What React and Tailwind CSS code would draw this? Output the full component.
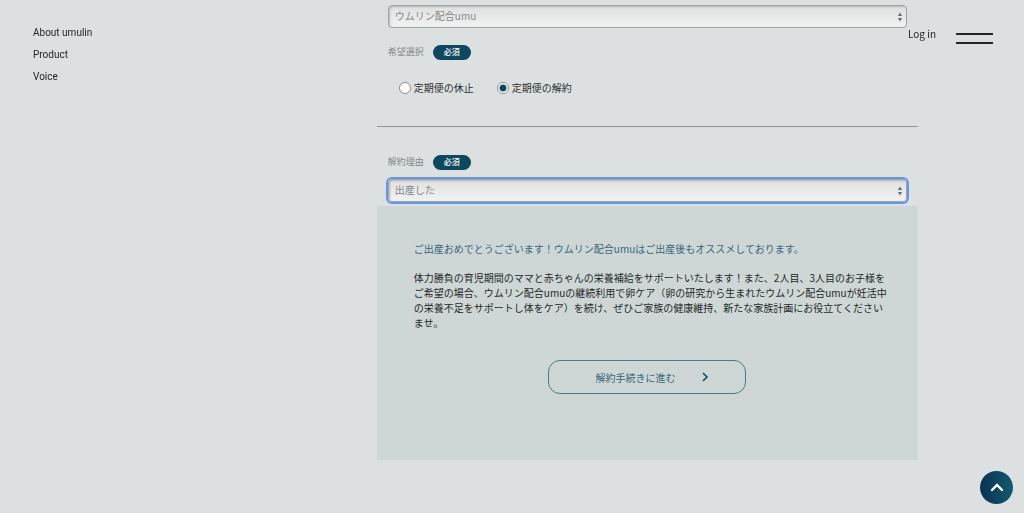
import React, { useState } from "react";

const products = ["ウムリン配合umu"];
const reasons = ["出産した"];

function Required() {
  return (
    <span className="w-[38px] h-[15px] flex items-center justify-center rounded-full bg-[#0d485e] text-white text-[8px] leading-none font-medium">
      必須
    </span>
  );
}

function SelectBox({ id, label, options, active }) {
  return (
    <div className="relative">
      <select
        id={id}
        aria-label={label}
        className={
          "block w-full h-[23px] pl-[6px] pr-5 pb-[2px] appearance-none rounded-[4px] border border-[#a2a5a6] bg-linear-to-b from-[#dfe1e0] to-[#f1f3f2] text-[10px] text-[#858888] outline-none shadow-[inset_1px_1px_2px_#b5b8b8] " +
          (active ? "ring-2 ring-[#6695ea]" : "")
        }
      >
        {options.map((option) => (
          <option key={option}>{option}</option>
        ))}
      </select>
      <svg
        viewBox="0 0 6 10"
        className="absolute right-1 top-[7px] w-[6px] h-[10px] pointer-events-none"
        fill="#6b6e6f"
      >
        <path d="M3 0.5 5.2 4H0.8Z" />
        <path d="M3 9.5 0.8 6h4.4Z" />
      </svg>
    </div>
  );
}

function Radio({ value, label, checked, onChange }) {
  return (
    <label className="flex items-center gap-[3px] text-[10px] leading-4 text-[#2b2f30]">
      <input
        type="radio"
        name="wish"
        value={value}
        checked={checked}
        onChange={() => onChange(value)}
        className="w-3 h-3 appearance-none rounded-full border border-[#8b8e90] bg-white checked:bg-[radial-gradient(circle,#0d485e_3px,#fff_4px)]"
      />
      {label}
    </label>
  );
}

function App() {
  const [wish, setWish] = useState("cancel");

  return (
    <div className="min-h-screen bg-[#dce0e1] font-['Noto_Sans_CJK_JP',sans-serif]">
      <header className="fixed inset-x-0 top-0 z-10 flex items-start justify-between pl-[33px] pr-[31px] pt-[22px] text-[10px] text-[#232627] pointer-events-none">
        <nav className="flex flex-col font-[Roboto,sans-serif] pointer-events-auto">
          <a href="#about" className="leading-[22px]">About umulin</a>
          <a href="#product" className="leading-[22px]">Product</a>
          <a href="#voice" className="leading-[22px]">Voice</a>
        </nav>
        <div className="flex items-start gap-5 pointer-events-auto">
          <a href="#login" className="leading-6">Log in</a>
          <button type="button" aria-label="Menu" className="w-[37px] flex flex-col gap-[7px] pt-[11px]">
            <span className="w-full h-[2px] bg-[#232627]"></span>
            <span className="w-full h-[2px] bg-[#232627]"></span>
          </button>
        </div>
      </header>

      <main className="ml-[36.8%] mr-[106px] pt-[5px] pb-[53px]">
        <section className="px-[11px]">
          <SelectBox id="product" label="Product" options={products} />
          <div className="flex items-center gap-[9px] mt-4 h-4">
            <span className="text-[9px] text-[#858888]">希望選択</span>
            <Required />
          </div>
          <div className="flex gap-[23px] mt-5 pl-[11px] h-4">
            <Radio value="pause" label="定期便の休止" checked={wish === "pause"} onChange={setWish} />
            <Radio value="cancel" label="定期便の解約" checked={wish === "cancel"} onChange={setWish} />
          </div>
        </section>

        <hr className="mt-[30px] border-t border-[#919596]" />

        <section className="px-[11px] mt-[27px]">
          <div className="flex items-center gap-[9px] h-4">
            <label htmlFor="reason" className="text-[9px] text-[#858888]">解約理由</label>
            <Required />
          </div>
          <div className="mt-[9px]">
            <SelectBox id="reason" options={reasons} active />
          </div>
        </section>

        <section className="mt-1 pt-[35px] pb-[66px] bg-[#cfd7d6] text-[10px] leading-[15px] text-[#232829]">
          <div className="pl-[37px] pr-7">
            <p className="text-[#34677a]">
              ご出産おめでとうございます！ウムリン配合umuはご出産後もオススメしております。
            </p>
            <p className="mt-[14px]">
              体力勝負の育児期間のママと赤ちゃんの栄養補給をサポートいたします！また、2人目、3人目のお子様をご希望の場合、ウムリン配合umuの継続利用で卵ケア（卵の研究から生まれたウムリン配合umuが妊活中の栄養不足をサポートし体をケア）を続け、ぜひご家族の健康維持、新たな家族計画にお役立てくださいませ。
            </p>
          </div>
          <button
            type="button"
            className="flex items-center justify-center gap-[26px] w-[198px] h-[34px] mt-[30px] mx-auto pl-[10px] rounded-xl border border-[#4b7b8a] text-[#34677a]"
          >
            解約手続きに進む
            <svg viewBox="0 0 8 10" className="w-2 h-[10px]" fill="none" stroke="#174c60" strokeWidth="1.6">
              <path d="M2 1l4 4-4 4" />
            </svg>
          </button>
        </section>
      </main>

      <a
        href="#top"
        aria-label="Top"
        className="fixed right-[11px] bottom-[9px] w-[33px] h-[33px] flex items-center justify-center rounded-full bg-linear-to-r from-[#0b3152] to-[#125a6e]"
      >
        <svg viewBox="0 0 14 9" className="w-[14px] h-[9px]" fill="none" stroke="#fff" strokeWidth="2.4" strokeLinecap="round">
          <path d="M2 7l5-5 5 5" />
        </svg>
      </a>
    </div>
  );
}

export default App;
